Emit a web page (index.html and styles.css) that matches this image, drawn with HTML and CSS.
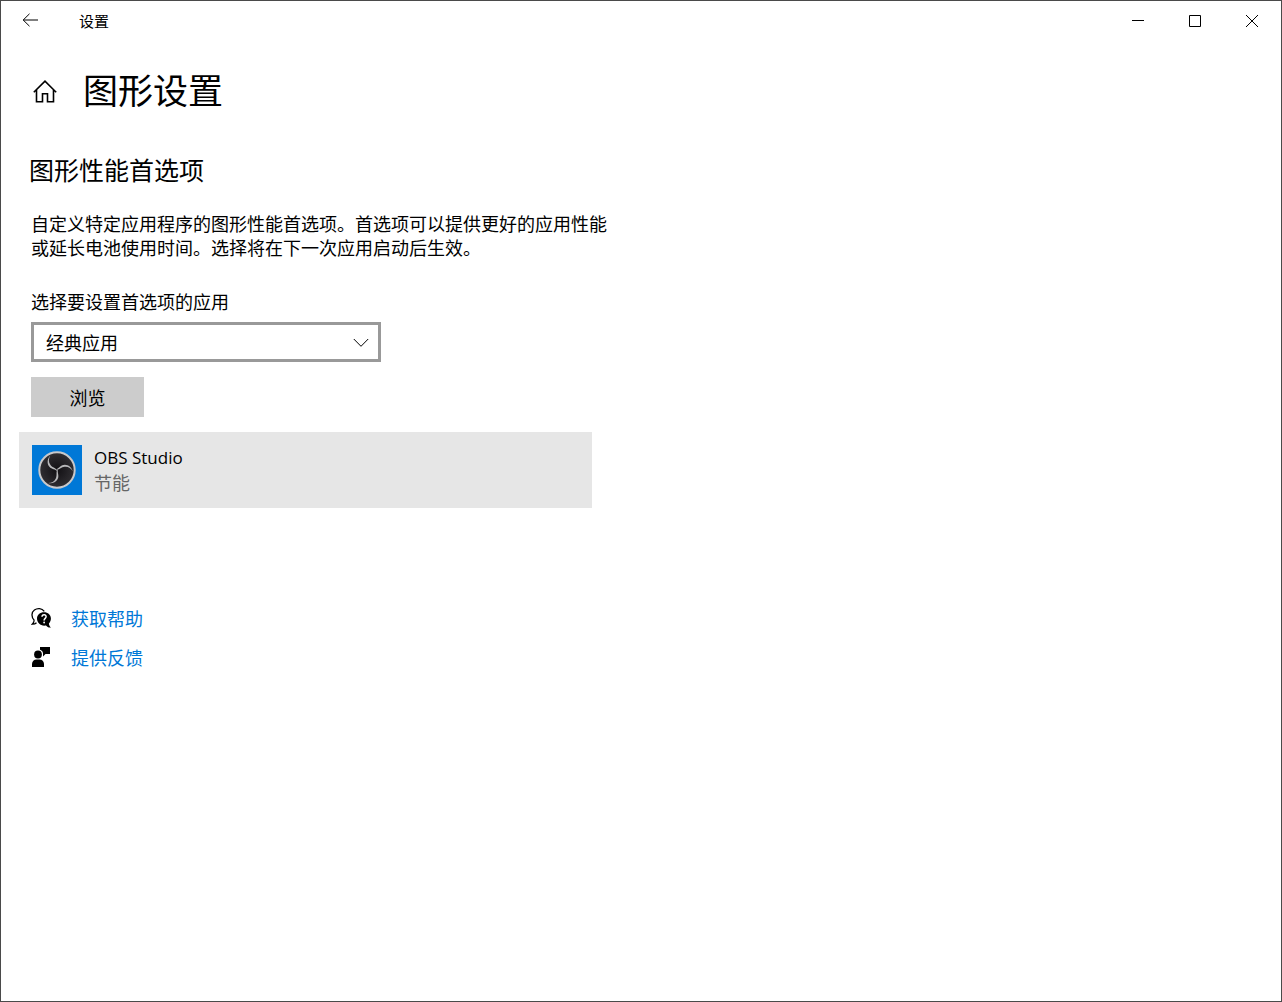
FILE: index.html
```html
<!DOCTYPE html>
<html lang="zh-CN">
<head>
    <meta charset="UTF-8">
    <meta name="viewport" content="width=device-width, initial-scale=1.0">
    <title>设置</title>
    <link rel="stylesheet" href="styles.css">
</head>
<body>

    <div class="window">
        <div class="title-bar">
            <button class="back-button" aria-label="返回">
                <svg width="16" height="14" viewBox="0 0 16 14"><path d="M7.5 .8L1.2 7l6.3 6.2M1.2 7H16"/></svg>
            </button>
            <span class="window-title">设置</span>
            <div class="window-controls">
                <button aria-label="最小化">
                    <svg width="13" height="13" viewBox="0 0 13 13"><path d="M0 6.5h12"/></svg>
                </button>
                <button aria-label="最大化">
                    <svg width="13" height="13" viewBox="0 0 13 13"><path d="M.5 1.5h11v11H.5z"/></svg>
                </button>
                <button aria-label="关闭">
                    <svg width="13" height="13" viewBox="0 0 13 13"><path d="M0 1l12 12M12 1L0 13"/></svg>
                </button>
            </div>
        </div>

        <header class="page-header">
            <a href="#" class="home-link" aria-label="主页">
                <svg width="24" height="23" viewBox="0 0 24 23"><path d="M.8 12.2L12 1.2l11.200 11M3.500 10v11.800h6v-8h5v8h6V10"/></svg>
            </a>
            <h1>图形设置</h1>
        </header>

        <main>
            <h2>图形性能首选项</h2>
            <p class="description">自定义特定应用程序的图形性能首选项。首选项可以提供更好的应用性能或延长电池使用时间。选择将在下一次应用启动后生效。</p>

            <label for="app-type">选择要设置首选项的应用</label>
            <div class="select-box">
                <select id="app-type">
                    <option>经典应用</option>
                    <option>Microsoft Store 应用</option>
                </select>
                <svg class="chevron" width="16" height="10" viewBox="0 0 16 10"><path d="M.8 1L8 8.300 15.200 1"/></svg>
            </div>

            <button class="browse-button">浏览</button>

            <ul class="app-list">
                <li class="app-item">
                    <svg class="app-icon" width="50" height="50" viewBox="0 0 50 50">
                        <defs>
                            <radialGradient id="disc" cx="50%" cy="50%" r="50%">
                                <stop offset="0" stop-color="#121014"/>
                                <stop offset="1" stop-color="#302e32"/>
                            </radialGradient>
                            <!-- one curved blade, repeated three times round the centre -->
                            <path id="blade" d="M25 25.500C24 22.900 20.500 22.800 18.500 20C16.300 17 16.500 14 18.200 10.800C15.600 13.600 14.800 17.500 16.600 20.800C18.600 24.200 22 23.600 25 26z"/>
                        </defs>
                        <rect width="50" height="50" fill="#0078d7"/>
                        <circle cx="25" cy="25" r="17.700" fill="url(#disc)" stroke="#c8c8ca" stroke-width="2"/>
                        <g fill="#b8b8ba">
                            <use href="#blade"/>
                            <use href="#blade" transform="rotate(120 25 25)"/>
                            <use href="#blade" transform="rotate(240 25 25)"/>
                        </g>
                    </svg>
                    <div>
                        <div class="app-name">OBS Studio</div>
                        <div class="app-mode">节能</div>
                    </div>
                </li>
            </ul>

            <nav class="help-links">
                <a href="#">
                    <svg width="20" height="20" viewBox="0 0 20 20">
                        <path d="M3.200 12.200C.2 9 .2 4.500 3.400 2.100c3-2.200 7.500-1.900 9.900 1.200M3.200 12.200c-.2 1.900-.9 3.200-2 4 1.700.1 3.300-.5 4.300-1.500" fill="none" stroke="#000" stroke-width="1.300"/>
                        <path d="M13 4.300c4 0 6.900 2.700 6.900 6.300 0 2-.8 3.700-2 4.900.2 1.700.8 3 2.100 4-2.200.3-3.900-.5-5-2-5 .9-9-2.300-9-6.900 0-3.600 3-6.300 7-6.300z"/>
                        <path d="M11 8.800c.1-3 4.300-2.700 4.100 0-.1 1.500-2 1.700-2 3.600" fill="none" stroke="#fff" stroke-width="1.500"/>
                        <circle cx="13.100" cy="14.500" r=".9" fill="#fff"/>
                    </svg>
                    <span>获取帮助</span>
                </a>
                <a href="#">
                    <svg width="20" height="20" viewBox="0 0 20 20">
                        <path d="M9 0h10v7h-4.500L12 9.500V6.200C11.700 4.300 10.600 3.200 9 2.800z"/>
                        <circle cx="7" cy="7.500" r="3.900"/>
                        <path d="M1 20v-3c0-2.700 2-4.500 4.500-4.500h3c2.500 0 4.500 1.800 4.500 4.500v3z"/>
                    </svg>
                    <span>提供反馈</span>
                </a>
            </nav>
        </main>
    </div>

</body>
</html>
```

FILE: styles.css
```css
* {
    box-sizing: border-box;
}
body {
    margin: 0;
    font-family: "Noto Sans CJK SC", sans-serif;
    font-size: 18px;
    line-height: 24px;
    color: #000;
    background-color: #fff;
}
button, select {
    font: inherit;
    color: inherit;
    border: none;
    border-radius: 0;
}
svg {
    display: block;
    flex-shrink: 0;
}
.window {
    min-height: 100vh;
    border: 1px solid #4a4a4a;
}
.title-bar {
    display: flex;
    align-items: center;
    height: 40px;
}
.title-bar button {
    display: flex;
    align-items: center;
    justify-content: center;
    width: 57px;
    height: 40px;
    padding: 0 0 2px;
    background: none;
}
.title-bar svg, .home-link svg, .chevron {
    fill: none;
    stroke: #000;
}
.title-bar button:hover {
    background-color: #e6e6e6;
}
.window-title {
    margin-left: 21px;
    font-size: 15px;
}
.window-controls {
    display: flex;
    margin-left: auto;
}
.page-header {
    display: flex;
    align-items: center;
    gap: 26px;
    padding: 24px 32px 0;
}
.home-link svg {
    stroke-width: 1.6;
}
h1 {
    margin: 0;
    padding-bottom: 4px;
    font-size: 35px;
    font-weight: normal;
    line-height: 48px;
}
main {
    max-width: 640px;
    padding: 38px 28px;
}
h2 {
    margin: 0 0 28px;
    font-size: 25px;
    font-weight: normal;
    line-height: 28px;
}
.description {
    max-width: 580px;
    margin: 0 0 30px 2px;
}
label {
    display: block;
    margin: 0 0 9px 2px;
}
.select-box {
    position: relative;
    max-width: 350px;
    margin: 0 0 15px 2px;
}
select {
    display: block;
    width: 100%;
    height: 40px;
    padding: 0 40px 0 12px;
    border: 3px solid #999;
    background-color: #fff;
    appearance: none;
}
/* Arrow drawn over the right end of the drop-down */
.chevron {
    position: absolute;
    top: 16px;
    right: 12px;
    pointer-events: none;
}
.browse-button {
    display: block;
    min-width: 113px;
    height: 40px;
    margin-left: 2px;
    padding: 0 24px;
    background-color: #ccc;
}
.app-list {
    max-width: 573px;
    margin: 15px 0 98px -10px;
    padding: 0;
    list-style: none;
}
.app-item {
    display: flex;
    align-items: center;
    gap: 12px;
    padding: 13px;
    background-color: #e6e6e6;
}
.app-name {
    font-family: "Open Sans", "Noto Sans CJK SC", sans-serif;
    font-size: 17px;
}
.app-mode {
    color: #666;
}
.help-links {
    display: flex;
    flex-direction: column;
    align-items: flex-start;
    gap: 15px;
    margin-left: 2px;
}
.help-links a {
    display: flex;
    align-items: center;
    gap: 20px;
    color: #0078d7;
    text-decoration: none;
}
.help-links a:hover {
    color: #666;
}
```
